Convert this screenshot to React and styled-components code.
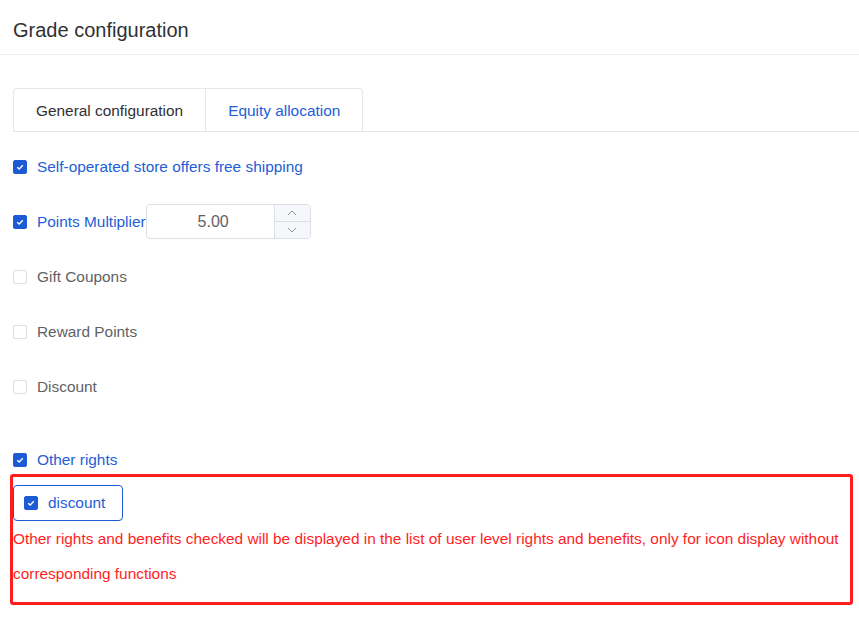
import React from "react";
import styled, { createGlobalStyle } from "styled-components";

const GlobalStyle = createGlobalStyle`
  body {
    margin: 0;
    background: #ffffff;
    font-family: "Liberation Sans", Arial, sans-serif;
  }
`;

const Page = styled.div`
  width: 859px;
  min-height: 628px;
  background: #fff;
`;

const Header = styled.div`
  height: 54px;
  display: flex;
  align-items: center;
  padding-left: 13px;
  border-bottom: 1px solid #ebedf2;
`;

const Title = styled.h1`
  margin: 0;
  margin-top: 6px;
  font-size: 20px;
  font-weight: normal;
  color: #303133;
`;

const Body = styled.div`
  padding-left: 13px;
  padding-top: 33px;
`;

const TabBar = styled.div`
  display: flex;
  border-bottom: 1px solid #e4e7ed;
`;

const Tabs = styled.div`
  display: flex;
  border: 1px solid #e4e7ed;
  border-bottom: none;
  border-radius: 4px 4px 0 0;
`;

const Tab = styled.div`
  height: 41px;
  display: flex;
  align-items: center;
  padding: 1px 22px 0;
  font-size: 15.4px;
  color: ${(p) => (p.active ? "#2360d8" : "#303133")};
  & + & {
    border-left: 1px solid #e4e7ed;
  }
`;

const Form = styled.div`
  padding-top: 7px;
`;

const Row = styled.div`
  height: 55px;
  display: flex;
  align-items: center;
`;

const Box = styled.span`
  width: 14px;
  height: 14px;
  box-sizing: border-box;
  border-radius: 2px;
  flex-shrink: 0;
  display: inline-flex;
  align-items: center;
  justify-content: center;
  background: ${(p) => (p.checked ? "#1d5bd6" : "#fff")};
  border: 1px solid ${(p) => (p.checked ? "#1d5bd6" : "#dcdfe6")};
`;

const Label = styled.span`
  margin-left: 10px;
  font-size: 15.4px;
  color: ${(p) => (p.checked ? "#2360d8" : "#606266")};
`;

const Check = ({ checked, children }) => (
  <>
    <Box checked={checked}>
      {checked && (
        <svg width="10" height="10" viewBox="0 0 10 10">
          <path d="M2.2 5.2 L4.2 7 L7.8 3.2" fill="none" stroke="#fff" strokeWidth="1.3" />
        </svg>
      )}
    </Box>
    <Label checked={checked}>{children}</Label>
  </>
);

const NumberInput = styled.div`
  display: flex;
  width: 165px;
  height: 35px;
  box-sizing: border-box;
  border: 1px solid #dcdfe6;
  border-radius: 4px;
  overflow: hidden;
`;

const NumberValue = styled.div`
  flex: 1;
  display: flex;
  align-items: center;
  justify-content: center;
  padding-left: 6px;
  font-size: 16px;
  color: #606266;
`;

const Steps = styled.div`
  width: 35px;
  display: flex;
  flex-direction: column;
  border-left: 1px solid #dcdfe6;
  background: #f5f7fa;
`;

const Step = styled.div`
  flex: 1;
  display: flex;
  align-items: center;
  justify-content: center;
  & + & {
    border-top: 1px solid #dcdfe6;
  }
`;

const Arrow = ({ up }) => (
  <svg width="10" height="6" viewBox="0 0 10 6">
    <path
      d={up ? "M1 5 L5 1 L9 5" : "M1 1 L5 5 L9 1"}
      fill="none"
      stroke="#909399"
      strokeWidth="1"
    />
  </svg>
);

const OtherRow = styled.div`
  height: 28px;
  margin-top: 32px;
  display: flex;
  align-items: center;
`;

const Notice = styled.div`
  margin-left: -3px;
  width: 837px;
  border: 3px solid #ff1e1e;
  border-radius: 3px;
  padding: 8px 0 11px 0;
`;

const Tag = styled.div`
  width: 110px;
  height: 36px;
  box-sizing: border-box;
  border: 1px solid #1d5bd6;
  border-radius: 4px;
  display: flex;
  align-items: center;
  padding-left: 10px;
`;

const Hint = styled.p`
  margin: 0;
  font-size: 15.4px;
  line-height: 35px;
  color: #ff1e1e;
`;

export default function App() {
  return (
    <Page>
      <GlobalStyle />
      <Header>
        <Title>Grade configuration</Title>
      </Header>
      <Body>
        <TabBar>
          <Tabs>
            <Tab>General configuration</Tab>
            <Tab active>Equity allocation</Tab>
          </Tabs>
        </TabBar>
        <Form>
          <Row>
            <Check checked>Self-operated store offers free shipping</Check>
          </Row>
          <Row>
            <Check checked>Points Multiplier</Check>
            <NumberInput>
              <NumberValue>5.00</NumberValue>
              <Steps>
                <Step>
                  <Arrow up />
                </Step>
                <Step>
                  <Arrow />
                </Step>
              </Steps>
            </NumberInput>
          </Row>
          <Row>
            <Check>Gift Coupons</Check>
          </Row>
          <Row>
            <Check>Reward Points</Check>
          </Row>
          <Row>
            <Check>Discount</Check>
          </Row>
          <OtherRow>
            <Check checked>Other rights</Check>
          </OtherRow>
          <Notice>
            <Tag>
              <Check checked>discount</Check>
            </Tag>
            <Hint>
              Other rights and benefits checked will be displayed in the list of user level
              rights and benefits, only for icon display without corresponding functions
            </Hint>
          </Notice>
        </Form>
      </Body>
    </Page>
  );
}
